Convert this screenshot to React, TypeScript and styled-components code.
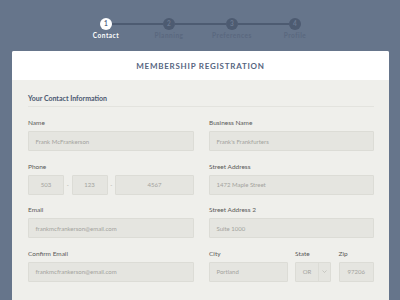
import React from "react";
import styled, { createGlobalStyle } from "styled-components";

const GlobalStyle = createGlobalStyle`
  html, body {
    margin: 0;
    padding: 0;
    background-color: #66758b;
    font-family: "Lato", "Open Sans", sans-serif;
  }
`;

const Page = styled.div`
  width: 400px;
  height: 300px;
  overflow: hidden;
  background-color: #66758b;
`;

const Stepper = styled.div`
  padding-top: 18px;
  display: flex;
  flex-direction: column;
  align-items: center;
`;

const Track = styled.div`
  display: flex;
  align-items: center;
  margin-left: 1px;
`;

const Dot = styled.div<{ $active?: boolean }>`
  width: 12px;
  height: 12px;
  border-radius: 50%;
  background-color: ${(p) => (p.$active ? "#ffffff" : "#4d5b71")};
  color: ${(p) => (p.$active ? "#56657f" : "#6b7990")};
  font-size: 6.5px;
  font-weight: 700;
  display: flex;
  align-items: center;
  justify-content: center;
  line-height: 1;
`;

const Line = styled.div`
  width: 51px;
  height: 2px;
  background-color: #4d5b71;
`;

const Labels = styled.div`
  display: grid;
  grid-template-columns: repeat(4, 63px);
  margin-top: 2px;
  margin-left: 1px;
`;

const StepLabel = styled.div<{ $active?: boolean }>`
  text-align: center;
  font-size: 6.5px;
  line-height: 8px;
  font-weight: 700;
  letter-spacing: 0.5px;
  color: ${(p) => (p.$active ? "#ffffff" : "#5a687f")};
`;

const Card = styled.div`
  margin: 11px 11px 0 12px;
  border-radius: 2px;
  overflow: hidden;
  background-color: #efefeb;
`;

const CardHeader = styled.div`
  height: 29px;
  background-color: #ffffff;
  display: flex;
  align-items: center;
  justify-content: center;
`;

const Title = styled.h1`
  margin: 0;
  font-size: 8px;
  font-weight: 700;
  letter-spacing: 0.75px;
  color: #56657f;
`;

const CardBody = styled.div`
  padding: 14px 15px 20px 16px;
`;

const SectionTitle = styled.h2`
  margin: 0;
  padding-bottom: 4px;
  border-bottom: 1.5px solid #e3e3de;
  font-size: 7px;
  line-height: 8px;
  font-weight: 700;
  color: #4b5870;
`;

const Columns = styled.div`
  display: grid;
  grid-template-columns: 166px 165px;
  column-gap: 15px;
  margin-top: 12px;
`;

const Column = styled.div`
  display: flex;
  flex-direction: column;
`;

const Field = styled.div`
  margin-bottom: 11.5px;
`;

const Label = styled.div`
  font-size: 6.5px;
  line-height: 8px;
  color: #5a5a58;
  margin-bottom: 4px;
`;

const Input = styled.div<{ $center?: boolean }>`
  box-sizing: border-box;
  height: 20px;
  background-color: #e5e5e0;
  border: 1px solid #dcdcd6;
  border-radius: 1px;
  display: flex;
  align-items: center;
  justify-content: ${(p) => (p.$center ? "center" : "flex-start")};
  padding: 0 ${(p) => (p.$center ? "0" : "6.5px")};
  font-size: 6px;
  color: #a3a39d;
`;

const PhoneRow = styled.div`
  display: grid;
  grid-template-columns: 36px 7.5px 36px 7.5px 1fr;
  align-items: center;
`;

const Dash = styled.span`
  text-align: center;
  font-size: 5.5px;
  color: #a6a6a0;
`;

const CityRow = styled.div`
  display: grid;
  grid-template-columns: 1fr 36px 35.5px;
  column-gap: 7.5px;
`;

const Select = styled.div`
  box-sizing: border-box;
  height: 20px;
  background-color: #e5e5e0;
  border: 1px solid #dcdcd6;
  border-radius: 1px;
  display: grid;
  grid-template-columns: 23px 1fr;
  font-size: 6px;
  color: #a3a39d;
`;

const SelectValue = styled.div`
  display: flex;
  align-items: center;
  justify-content: center;
  border-right: 1px solid #dcdcd6;
`;

const SelectArrow = styled.div`
  display: flex;
  align-items: center;
  justify-content: center;
`;

const steps = ["Contact", "Planning", "Preferences", "Profile"];

function App() {
  return (
    <Page>
      <GlobalStyle />
      <Stepper>
        <Track>
          {steps.map((s, i) => (
            <React.Fragment key={s}>
              {i > 0 && <Line />}
              <Dot $active={i === 0}>{i + 1}</Dot>
            </React.Fragment>
          ))}
        </Track>
        <Labels>
          {steps.map((s, i) => (
            <StepLabel key={s} $active={i === 0}>
              {s}
            </StepLabel>
          ))}
        </Labels>
      </Stepper>
      <Card>
        <CardHeader>
          <Title>MEMBERSHIP REGISTRATION</Title>
        </CardHeader>
        <CardBody>
          <SectionTitle>Your Contact Information</SectionTitle>
          <Columns>
            <Column>
              <Field>
                <Label>Name</Label>
                <Input>Frank McFrankerson</Input>
              </Field>
              <Field>
                <Label>Phone</Label>
                <PhoneRow>
                  <Input $center>503</Input>
                  <Dash>-</Dash>
                  <Input $center>123</Input>
                  <Dash>-</Dash>
                  <Input $center>4567</Input>
                </PhoneRow>
              </Field>
              <Field>
                <Label>Email</Label>
                <Input>frankmcfrankerson@email.com</Input>
              </Field>
              <Field>
                <Label>Confirm Email</Label>
                <Input>frankmcfrankerson@email.com</Input>
              </Field>
            </Column>
            <Column>
              <Field>
                <Label>Business Name</Label>
                <Input>Frank's Frankfurters</Input>
              </Field>
              <Field>
                <Label>Street Address</Label>
                <Input>1472 Maple Street</Input>
              </Field>
              <Field>
                <Label>Street Address 2</Label>
                <Input>Suite 1000</Input>
              </Field>
              <CityRow>
                <Field>
                  <Label>City</Label>
                  <Input>Portland</Input>
                </Field>
                <Field>
                  <Label>State</Label>
                  <Select>
                    <SelectValue>OR</SelectValue>
                    <SelectArrow>
                      <svg width="5" height="3" viewBox="0 0 5 3">
                        <path d="M0.5 0.5 L2.5 2.5 L4.5 0.5" fill="none" stroke="#b3b3ad" strokeWidth="0.6" />
                      </svg>
                    </SelectArrow>
                  </Select>
                </Field>
                <Field>
                  <Label>Zip</Label>
                  <Input $center>97206</Input>
                </Field>
              </CityRow>
            </Column>
          </Columns>
        </CardBody>
      </Card>
    </Page>
  );
}

export default App;
